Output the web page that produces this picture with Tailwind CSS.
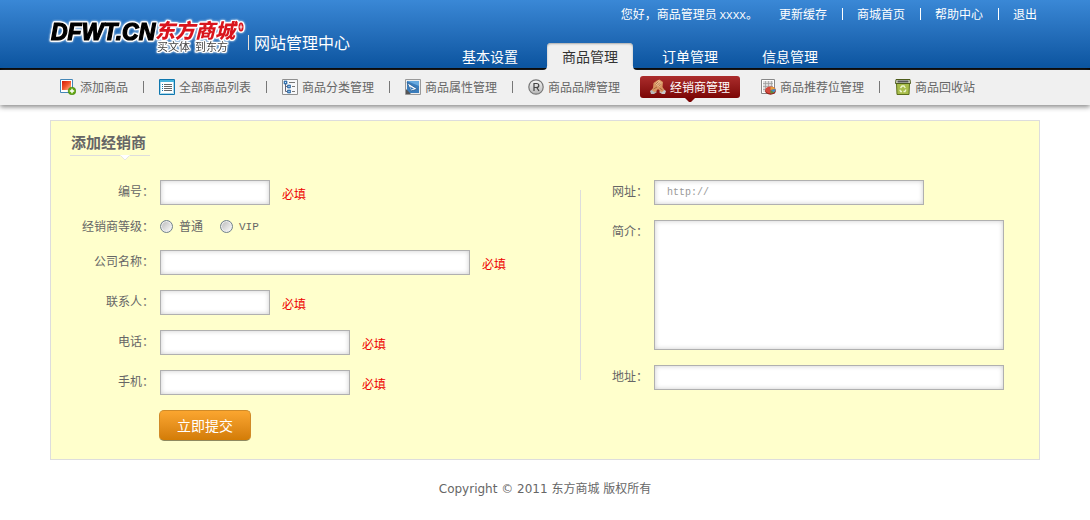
<!DOCTYPE html>
<html lang="zh-CN">
<head>
  <meta charset="UTF-8" />
  <meta name="viewport" content="width=device-width, initial-scale=1.0"/>
  <title>东方商城 网站管理中心</title>
  <script src="https://cdn.jsdelivr.net/npm/@tailwindcss/browser@4"></script>
</head>
<body class="bg-white text-xs text-[#666] font-['Noto_Sans_CJK_SC',sans-serif]">

  <!-- Header -->
  <header class="flex h-[70px] px-[50px] text-white bg-linear-to-b from-[#3a88d6] to-[#0a549f] border-b-2 border-black">
    <div class="flex w-[397px] shrink-0 pt-[18px]">
      <svg class="w-[198px] h-[36px] shrink-0 overflow-visible [filter:drop-shadow(1px_0_0_#fff)_drop-shadow(-1px_0_0_#fff)_drop-shadow(0_1px_0_#fff)_drop-shadow(0_-1px_0_#fff)_drop-shadow(0_0_1px_#fff)]" viewBox="0 0 198 36" role="img" aria-label="东方商城">
        <text x="1" y="22" font-family="Liberation Sans" font-size="23" font-weight="700" font-style="italic" fill="#000" stroke="#000" stroke-width="1.200">DFWT.CN</text>
        <text x="105" y="20" font-family="Noto Sans CJK SC" font-size="20" font-weight="900" font-style="italic" fill="#d9141c">东方商城</text>
        <text x="107" y="33" font-family="Noto Sans CJK SC" font-size="11" fill="#444">买文体 &#160;到东方</text>
        <ellipse cx="191" cy="9" rx="2.500" ry="4.500" fill="#d9141c"/>
        <path d="M189.500 9h3M191 6.500v5" stroke="#fff" stroke-width="1"/>
      </svg>
      <h1 class="flex items-center h-4 mt-4 text-base leading-4 before:content-[''] before:w-px before:h-[15px] before:bg-[#e8e0d8] before:mr-[5px]">网站管理中心</h1>
    </div>

    <div class="flex flex-1 flex-col justify-between">
      <div class="flex items-center justify-end pt-[5px] pr-[3px] leading-[18px] whitespace-nowrap">
        <span class="mr-[21px]">您好，商品管理员 <span class="font-['Liberation_Mono',monospace] text-[11px] leading-none">XXXX</span>。</span>
        <a href="#">更新缓存</a>
        <i class="w-px h-3 ml-[15px] mr-[14px] bg-white"></i>
        <a href="#">商城首页</a>
        <i class="w-px h-3 ml-[15px] mr-[14px] bg-white"></i>
        <a href="#">帮助中心</a>
        <i class="w-px h-3 ml-[15px] mr-[14px] bg-white"></i>
        <a href="#">退出</a>
      </div>

      <nav class="flex gap-[14px] -mb-[2px] text-sm leading-[27px] whitespace-nowrap">
        <a href="#" class="px-[15px]">基本设置</a>
        <a href="#" class="relative px-[15px] rounded-t-[4px] bg-[#f0f0f0] text-[#333] shadow-[inset_0_1px_2px_#aaa] after:content-[''] after:absolute after:inset-x-0 after:bottom-0 after:h-1 after:bg-[#f0f0f0]">商品管理
          <svg class="absolute -left-1 bottom-0 w-1 h-1" viewBox="0 0 4 4"><path d="M4 0v4H0Q4 4 4 0z" fill="#f0f0f0"/></svg>
          <svg class="absolute -right-1 bottom-0 w-1 h-1" viewBox="0 0 4 4"><path d="M0 0v4h4Q0 4 0 0z" fill="#f0f0f0"/></svg>
        </a>
        <a href="#" class="px-[15px]">订单管理</a>
        <a href="#" class="px-[15px]">信息管理</a>
      </nav>
    </div>
  </header>

  <!-- Sub navigation -->
  <nav class="flex items-center h-[35px] px-[60px] pb-px bg-[#f0f0f0] leading-[22px] whitespace-nowrap shadow-[0_2px_5px_#888]">
    <a href="#" class="flex items-center gap-1">
      <svg class="w-4 h-4" viewBox="0 0 16 16">
        <defs><linearGradient id="red" x2="1" y2="1"><stop stop-color="#d51a05"/><stop offset=".5" stop-color="#f0552c"/><stop offset="1" stop-color="#ffc090"/></linearGradient></defs>
        <path d="M.5.500h12v13H.500z" fill="#fff" stroke="#4587b7"/>
        <path d="M2 2h9v9H2z" fill="url(#red)"/>
        <circle cx="12" cy="12" r="3.800" fill="#63a810" stroke="#3e7d08" stroke-width=".6"/>
        <path d="M9.800 12h4.400M12 9.800v4.400" stroke="#fff" stroke-width="1.400"/>
      </svg>添加商品</a>
    <i class="w-px h-3 mx-[15px] bg-[#777]"></i>
    <a href="#" class="flex items-center gap-1">
      <svg class="w-4 h-4" viewBox="0 0 16 16">
        <path d="M.5.500h15v15H.500z" fill="#fff" stroke="#0f77ae"/>
        <path d="M1 1h14v2H1z" fill="#48b4dd"/>
        <path d="M1.500 3v11.500h13V3" fill="none" stroke="#a8d8ec"/>
        <path d="M3 5.500h1m-1 2h1m-1 2h1m-1 2h1" stroke="#0f77ae"/>
        <path d="M5 5.500h8m-8 2h8m-8 2h8m-8 2h8" stroke="#666"/>
      </svg>全部商品列表</a>
    <i class="w-px h-3 mx-[15px] bg-[#777]"></i>
    <a href="#" class="flex items-center gap-1">
      <svg class="w-4 h-4" viewBox="0 0 16 16">
        <path d="M.5.500h15v15H.500z" fill="#f7f8fa" stroke="#909090"/>
        <path d="M3.500 5v7.500h2m-2-5h2" fill="none" stroke="#667"/>
        <path d="M2 2h3v3H2zM5.500 6h3v3h-3zM5.500 11h3v3h-3z" fill="#4383c1" stroke="#225a96" stroke-width=".6"/>
        <path d="M3 3h1v1H3zM6.500 7h1v1h-1zM6.500 12h1v1h-1z" fill="#cfe7fb"/>
        <path d="M7 3.500h6M10 7.500h3m-3 5h3" stroke="#777"/>
      </svg>商品分类管理</a>
    <i class="w-px h-3 mx-[15px] bg-[#777]"></i>
    <a href="#" class="flex items-center gap-1">
      <svg class="w-4 h-4" viewBox="0 0 16 16">
        <path d="M.5.500h15v15H.500z" fill="#eee" stroke="#999"/>
        <path d="M2 2h12v12H2z" fill="#3b7dbc"/>
        <path d="M2 2h12v5z" fill="#67a9df"/>
        <path d="M2 3.500L12.500 10 6 12z" fill="#fff" stroke="#235b92" stroke-width=".8"/>
        <path d="M5 7.500l4 2.200-3 1z" fill="#3b7dbc"/>
        <path d="M1 10l5 5H1z" fill="#555"/>
      </svg>商品属性管理</a>
    <i class="w-px h-3 mx-[15px] bg-[#777]"></i>
    <a href="#" class="flex items-center gap-1">
      <svg class="w-4 h-4" viewBox="0 0 16 16">
        <defs><linearGradient id="silver" x2="0" y2="1"><stop stop-color="#f8f8f8"/><stop offset="1" stop-color="#b5b5b5"/></linearGradient></defs>
        <circle cx="8" cy="8" r="7.200" fill="url(#silver)" stroke="#777" stroke-width="1.200"/>
        <path d="M6 12V4.500h2.500q2.300 0 2.300 2t-2.300 2H6m2.700 0L11 12" fill="none" stroke="#444" stroke-width="1.200"/>
      </svg>商品品牌管理</a>
    <a href="#" class="relative flex items-center gap-1 mx-5 px-[10px] rounded-[3px] bg-linear-to-b from-[#ab2c2c] to-[#7c0505] text-white">
      <svg class="w-4 h-4" viewBox="0 0 16 16">
        <path d="M0 12l3-2 4 3-3 2H1z" fill="#b9b9b9"/>
        <path d="M16 12l-3-2-4 3 3 2h3z" fill="#c9c9c9"/>
        <path d="M3 9l.5-5L7 1.500 9.500.500 13 3l-.5 5 2 3-3 2.500L8 10l-3 3.500L1.500 11z" fill="#d99561"/>
        <path d="M5 5l3.500-4L12 4 9 8.500z" fill="#efbd8e"/>
        <path d="M5.500 5.500l3-3M7 6.500l3-3M8.500 7.500l2.500-3M3.500 10L7 8M9.500 9l3 2" stroke="#874725" stroke-width=".6"/>
      </svg>经销商管理
      <svg class="absolute left-1/2 -bottom-1 -ml-[5px] w-[10px] h-1" viewBox="0 0 10 4"><path d="M0 0h10L6 4H4z" fill="#7c0505"/></svg>
    </a>
    <a href="#" class="flex items-center gap-1">
      <svg class="w-4 h-4" viewBox="0 0 16 16">
        <path d="M1.500.500h13v14h-13z" fill="#fff" stroke="#888"/>
        <path d="M3 2h10v11H3z" fill="#ddd"/>
        <path d="M3 4.500h10M3 7.500h10m-10 3h5M5.500 2v11M8.500 2v6M11.500 2v6" stroke="#999" stroke-width=".7"/>
        <ellipse cx="10.500" cy="12" rx="5.300" ry="3.700" fill="#8f1f17"/>
        <ellipse cx="10.500" cy="11" rx="5.200" ry="3.400" fill="#d4493c"/>
        <path d="M10.500 11V7.800q3.500 0 4.800 2.200z" fill="#e8a33b"/>
        <path d="M10.500 11l4.800-1q1 2-1.500 3.500z" fill="#3a8fc4"/>
        <path d="M10.500 11l3.300 2.500q-1.500 1-3.300 1z" fill="#57913a"/>
      </svg>商品推荐位管理</a>
    <i class="w-px h-3 mx-[15px] bg-[#777]"></i>
    <a href="#" class="flex items-center gap-1">
      <svg class="w-4 h-4" viewBox="0 0 16 16">
        <path d="M1.500 4.500h13l-.5 11H2z" fill="#a8bd4b" stroke="#5c6f1c"/>
        <path d="M1 .500h14l.5 4H.500z" fill="#d8dccb" stroke="#4d5c1b"/>
        <path d="M2.500 1.500h11v2h-11z" fill="#555"/>
        <path d="M5.500 9L7 7h2l1.300 2M11 10.500L10 12.500H8.500M7 12.500H5.700l-.9-1.800" fill="none" stroke="#eef5cf" stroke-width="1.300"/>
      </svg>商品回收站</a>
  </nav>

  <!-- Dealer form -->
  <main class="mx-[50px] mt-[15px] px-[19px] pt-3 pb-[18px] border border-[#ddd] bg-[#ffffcc]">
    <h2 class="relative w-20 h-[23px] pl-px border-b border-[#ddd] text-[15px] leading-[18px] font-bold">添加经销商
      <svg class="absolute left-[50px] -bottom-[5px] w-[10px] h-[5px]" viewBox="0 0 10 5"><path d="M0 0h10L5 5z" fill="#fff"/><path d="M1 1l4 4 4-4" fill="none" stroke="#ddd" stroke-width=".7"/></svg>
    </h2>

    <form class="flex mt-6 leading-[22px]">
      <div class="flex-1 space-y-[15px]">
        <div class="flex h-[25px]">
          <label for="code" class="w-[84px] mr-[6px] text-right whitespace-nowrap">编号：</label>
          <input type="text" id="code" class="w-[110px] px-3 border border-[#b0b0b0] bg-white shadow-[inset_0_0_5px_#ccc]"/>
          <span class="ml-3 pt-[3px] text-[#e00]">必填</span>
        </div>

        <div class="flex items-start h-[15px]">
          <span class="w-[84px] mr-[6px] -mt-[5px] text-right whitespace-nowrap">经销商等级：</span>
          <input type="radio" name="level" id="normal" class="appearance-none w-[13px] h-[13px] rounded-full border border-[#71818d] bg-linear-to-br from-[#b8b8b8] to-white shadow-[inset_0_0_0_1px_#eee] checked:bg-[#555]"/>
          <label for="normal" class="w-[41px] ml-[6px] -mt-[5px]">普通</label>
          <input type="radio" name="level" id="vip" class="appearance-none w-[13px] h-[13px] rounded-full border border-[#71818d] bg-linear-to-br from-[#b8b8b8] to-white shadow-[inset_0_0_0_1px_#eee] checked:bg-[#555]"/>
          <label for="vip" class="ml-[6px] -mt-1 font-['Liberation_Mono',monospace] text-[11px]">VIP</label>
        </div>

        <div class="flex h-[25px]">
          <label for="company" class="w-[84px] mr-[6px] text-right whitespace-nowrap">公司名称：</label>
          <input type="text" id="company" class="w-[310px] px-3 border border-[#b0b0b0] bg-white shadow-[inset_0_0_5px_#ccc]"/>
          <span class="ml-3 pt-[3px] text-[#e00]">必填</span>
        </div>

        <div class="flex h-[25px]">
          <label for="contact" class="w-[84px] mr-[6px] text-right whitespace-nowrap">联系人：</label>
          <input type="text" id="contact" class="w-[110px] px-3 border border-[#b0b0b0] bg-white shadow-[inset_0_0_5px_#ccc]"/>
          <span class="ml-3 pt-[3px] text-[#e00]">必填</span>
        </div>

        <div class="flex h-[25px]">
          <label for="phone" class="w-[84px] mr-[6px] text-right whitespace-nowrap">电话：</label>
          <input type="tel" id="phone" class="w-[190px] px-3 border border-[#b0b0b0] bg-white shadow-[inset_0_0_5px_#ccc]"/>
          <span class="ml-3 pt-[3px] text-[#e00]">必填</span>
        </div>

        <div class="flex h-[25px]">
          <label for="mobile" class="w-[84px] mr-[6px] text-right whitespace-nowrap">手机：</label>
          <input type="tel" id="mobile" class="w-[190px] px-3 border border-[#b0b0b0] bg-white shadow-[inset_0_0_5px_#ccc]"/>
          <span class="ml-3 pt-[3px] text-[#e00]">必填</span>
        </div>

        <button type="submit" class="block ml-[89px] w-[92px] h-[31px] pb-[2px] rounded-[5px] border border-[#d08a28] border-b-[#8f8a60] bg-linear-to-b from-[#fba62f] to-[#d37c05] text-sm text-white">立即提交</button>
      </div>

      <div class="w-px h-[190px] mt-[10px] bg-[#ddd]"></div>

      <div class="w-[439px] pr-4 space-y-[15px]">
        <div class="flex h-[25px]">
          <label for="url" class="w-[67px] mr-[6px] text-right shrink-0">网址：</label>
          <input type="url" id="url" placeholder="http://" class="w-[270px] px-3 border border-[#b0b0b0] bg-white shadow-[inset_0_0_5px_#ccc] font-['Liberation_Mono',monospace] text-[10px] placeholder:text-[#999]"/>
        </div>

        <div class="flex h-[130px]">
          <label for="intro" class="w-[67px] mr-[6px] text-right shrink-0">简介：</label>
          <textarea id="intro" class="flex-1 px-3 resize-none border border-[#b0b0b0] bg-white shadow-[inset_0_0_5px_#ccc]"></textarea>
        </div>

        <div class="flex h-[25px]">
          <label for="address" class="w-[67px] mr-[6px] text-right shrink-0">地址：</label>
          <input type="text" id="address" class="flex-1 px-3 border border-[#b0b0b0] bg-white shadow-[inset_0_0_5px_#ccc]"/>
        </div>
      </div>
    </form>
  </main>

  <footer class="mt-5 text-center leading-[18px] font-['DejaVu_Sans','Noto_Sans_CJK_SC',sans-serif]">Copyright © 2011 东方商城 版权所有</footer>

</body>
</html>
